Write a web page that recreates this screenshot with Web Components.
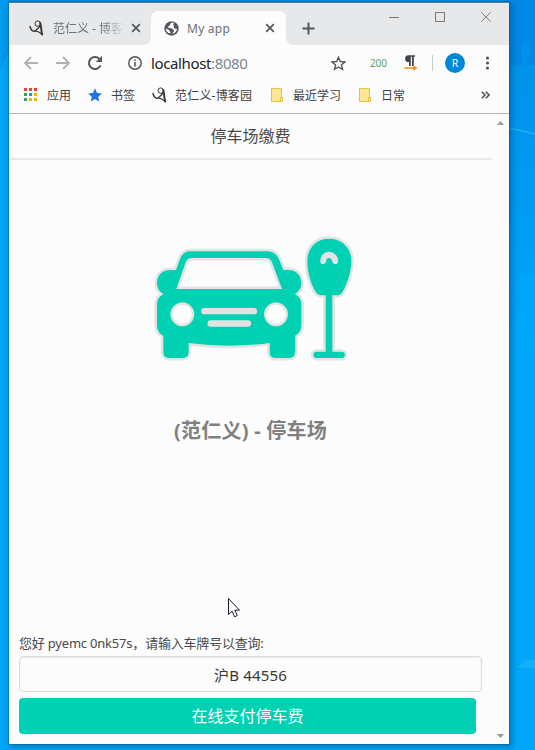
<!DOCTYPE html>
<html lang="zh-CN">
<head>
<meta charset="utf-8">
<title>My app</title>
<style>
html,body{margin:0;height:100%;overflow:hidden}
body{font-family:"Noto Sans","Noto Sans CJK SC",sans-serif;color:#3c4043}
</style>
</head>
<body>
<desk-top>
  <browser-window>
    <tab-strip slot="chrome"></tab-strip>
    <address-bar slot="chrome"></address-bar>
    <bookmark-bar slot="chrome"></bookmark-bar>
    <parking-page></parking-page>
  </browser-window>
</desk-top>
<script>
function define(name, html) {
  const t = document.createElement('template');
  t.innerHTML = html;
  customElements.define(name, class extends HTMLElement {
    constructor() {
      super();
      this.attachShadow({mode: 'open'}).append(t.content.cloneNode(true));
    }
  });
}

define('desk-top', `
<style>
:host{display:block;box-sizing:border-box;position:relative;width:535px;height:750px;padding:2px 26px 7px 9px;overflow:hidden;background:linear-gradient(#0090e8 0,#0095ec 100px,#009df5 220px,#00a7f8 330px,#00a7f8)}
.wall{position:absolute;inset:0}
</style>
<svg class="wall" width="535" height="750" viewBox="0 0 535 750">
<path d="M0 0h9v40L0 70z" fill="#009bf0"/><path d="M0 70L9 50V750H0z" fill="#00a5f6"/>
<path d="M521 43h9v14h-3v8h8V0h-26v66h14v-9h-2z" fill="#0089e5"/>
<path d="M509 128l26 6" stroke="#23adf7" stroke-width="1.600"/><path d="M520 274h15v80h-18v-31h4z" fill="#00a9fa" opacity=".6"/>
<path d="M516 668l9-8h10v8z" fill="#0fb0f8"/>
</svg>
<slot></slot>`);

define('browser-window', `
<style>
:host{position:relative;display:flex;flex-direction:column;box-sizing:border-box;width:500px;height:742px;border-top:1px solid #55809b;background:#fcfcfc;box-shadow:0 0 0 1px rgba(0,90,140,.45),2px 2px 6px 1px rgba(0,70,120,.5)}
.main{flex:1;display:flex;min-height:0}
.bar{width:17px;margin-left:auto;display:flex;flex-direction:column;justify-content:space-between;align-items:center;padding:7px 0 6px;box-sizing:border-box}
svg{display:block}
.cur{position:absolute;left:218px;top:594px}
</style>
<slot name="chrome"></slot>
<div class="main"><slot></slot>
<div class="bar"><svg width="7" height="4"><path d="M0 4L3.500 0L7 4z" fill="#999"/></svg><svg width="7" height="4"><path d="M0 0L3.500 4L7 0z" fill="#999"/></svg></div></div>
<svg class="cur" width="14" height="21" viewBox="0 0 14 21"><path d="M1.500 1.500v16l3.600-3.300 2.500 5.600 2.700-1.200-2.500-5.400h4.700z" fill="#fff" stroke="#1b1b2b" stroke-width="1"/></svg>`);

define('fan-icon', `
<style>:host{display:block;width:15px;height:16px}svg{display:block}</style>
<svg width="15" height="16" viewBox="0 0 15 16" fill="none" stroke="#3b3335" stroke-linecap="round"><path d="M1 6.500c.8 3.500 2.500 5.200 4.500 4.600S9 8.500 11 6" stroke-width="1.400"/><circle cx="8.700" cy="3.600" r="2.700" stroke-width="1"/><path d="M11.300 3c1 3 .7 7.500 1.900 11.500" stroke-width="1.900"/><path d="M6 11.200c2.500-.7 4.500 1 7 3.300" stroke-width="1.100"/></svg>`);

define('close-icon', `
<style>:host{display:block;width:10px;height:10px}svg{display:block}</style>
<svg width="10" height="10"><path d="M1.200 1.200l7.600 7.600M8.800 1.200L1.200 8.800" stroke="#53575b" stroke-width="1.700"/></svg>`);

define('tab-strip', `
<style>
:host{display:flex;height:42px;background:#e7e8ea;font-size:12px;color:#6d7175}
svg{display:block}
.tab{display:flex;align-items:center;height:34px;margin-top:8px;box-sizing:border-box}
.one{width:142px;padding:0 10px 0 20px}
.one span{width:74px;margin:0 4px 0 9px;white-space:nowrap;-webkit-mask-image:linear-gradient(90deg,#000 48px,transparent 72px)}
.two{position:relative;width:135px;padding:0 11px 0 13px;background:#fcfcfc;border-radius:7px 7px 0 0}
.two:before,.two:after{content:"";position:absolute;bottom:0;width:7px;height:7px}
.two:before{left:-7px;background:radial-gradient(circle at 0 0,transparent 6.500px,#fcfcfc 7px)}
.two:after{right:-7px;background:radial-gradient(circle at 100% 0,transparent 6.500px,#fcfcfc 7px)}
.two span{margin-left:8px;flex:1;white-space:nowrap;letter-spacing:.25px}
.plus{margin:19px 0 0 16px}
.win{display:flex;gap:36px;margin:9px 18px 0 auto;height:11px}
</style>
<div class="tab one"><fan-icon></fan-icon><span>范仁义 - 博客</span><close-icon></close-icon></div>
<div class="tab two"><svg width="15" height="15" viewBox="0 0 15 15"><circle cx="7.500" cy="7.500" r="7.200" fill="#53575b"/><path d="M8.500 1.500C6 1.500 7 3.500 5.500 4.500S4 6 4.500 7l3 .3c1.500.2 1 2 2.500 2 .5 1.200-1 2-2 3.500 3-.3 5-2.500 5-5-1-.3-2 .2-2.800-.8C9 6.500 10.500 5 9.500 4S10.500 2.500 10 2zM1.800 7.200c1.200 1.200 3.200.8 3.500 2.300.2 1 1.200 1 1.200 2.800C4 12.500 2 10.500 1.800 7.200z" fill="#fcfcfc"/></svg><span>My app</span><close-icon></close-icon></div>
<svg class="plus" width="13" height="13"><path d="M6.500 .5v12M.5 6.500h12" stroke="#53575b" stroke-width="2"/></svg>
<div class="win"><svg width="10" height="11"><path d="M0 5.500h10" stroke="#777"/></svg><svg width="10" height="11"><path d="M.5 .5h9v9h-9z" fill="none" stroke="#777"/></svg><svg width="10" height="11"><path d="M.3 .3l9.400 9.400M9.700 .3L.3 9.700" stroke="#777" stroke-width=".9"/></svg></div>`);

define('address-bar', `
<style>
:host{display:flex;align-items:center;height:36px;box-sizing:border-box;padding-left:14px}
svg{display:block;flex:none}
.url{width:180px;margin-left:9px;font-size:15px;color:#202124;white-space:nowrap;line-height:20px;letter-spacing:-.37px;padding-bottom:1px}
.url i{font-style:normal;color:#80868b}
.code{width:17px;margin-left:24px;font-size:10px;color:#62a062;white-space:nowrap;letter-spacing:-.1px}
.sep{width:1px;height:16px;background:#c0d0c6;margin-left:14px}
.av{width:20px;height:20px;border-radius:50%;background:#0088d8;color:#fff;font-size:10.500px;line-height:20px;text-align:center;margin-left:12px}
</style>
<svg width="16" height="16" viewBox="0 0 16 16"><path d="M15 8H2M8 2L2 8l6 6" fill="none" stroke="#afb0b1" stroke-width="1.800"/></svg>
<svg style="margin-left:16px" width="16" height="16" viewBox="0 0 16 16"><path d="M1 8h13M8 2l6 6-6 6" fill="none" stroke="#afb0b1" stroke-width="1.800"/></svg>
<svg style="margin-left:16px" width="16" height="16" viewBox="0 0 16 16"><path d="M13.500 10.300A6 6 0 1 1 12.200 3.800" fill="none" stroke="#53575b" stroke-width="2"/><path d="M15 .8v6.200H8.800z" fill="#53575b"/></svg>
<svg style="margin-left:25px" width="14" height="14" viewBox="0 0 14 14"><circle cx="7" cy="7" r="6.200" fill="none" stroke="#53575b" stroke-width="1.500"/><path d="M7 6v4.500M7 3.500v1.500" stroke="#53575b" stroke-width="1.600"/></svg>
<div class="url">localhost<i>:8080</i></div>
<svg width="15" height="15" viewBox="0 0 15 15"><path d="M7.500 1.300l1.800 4.200 4.600.4-3.500 3 1.100 4.500-4-2.400-4 2.400 1.100-4.500-3.500-3 4.600-.4z" fill="none" stroke="#53575b" stroke-width="1.400"/></svg>
<div class="code">200</div>
<svg style="margin-left:17px" width="14" height="16" viewBox="0 0 14 16"><path d="M11 .3H4.500a3.400 3.400 0 0 0 0 6.800H5v4h1.800V1.800H8V11h1.800V1.800H11z" fill="#41464c"/><path d="M.3 12.200h9v-2L13.500 13l-4.200 2.700v-1.900h-9z" fill="#f98b14"/></svg>
<div class="sep"></div><div class="av">R</div>
<svg style="margin-left:20px" width="5" height="14"><g fill="#53575b"><circle cx="2.500" cy="2" r="1.600"/><circle cx="2.500" cy="7" r="1.600"/><circle cx="2.500" cy="12" r="1.600"/></g></svg>`);

define('bookmark-bar', `
<style>
:host{display:flex;align-items:center;height:33px;box-sizing:border-box;padding:0 19px 5px 15px;border-bottom:1px solid #b3b7b3;font-size:12px;white-space:nowrap}
svg{display:block;flex:none}
span{flex:none}
</style>
<svg width="13" height="13"><g><path d="M0 0h3v3H0zM5 0h3v3H5zM10 0h3v3h-3z" fill="#ea4335"/><path d="M0 5h3v3H0zM0 10h3v3H0z" fill="#34a05a"/><path d="M5 5h3v3H5z" fill="#1a8cf0"/><path d="M10 5h3v3h-3zM5 10h3v3H5zM10 10h3v3h-3z" fill="#f5b400"/></g></svg>
<span style="margin-left:10px;width:24px">应用</span>
<svg style="margin-left:17px" width="14" height="14" viewBox="0 0 14 14"><path d="M7 .3l2 4.700 4.900.4-3.700 3.300 1.100 4.900L7 11l-4.300 2.600 1.100-4.900L.1 5.400 5 5z" fill="#1a73e8"/></svg>
<span style="margin-left:9px;width:24px">书签</span>
<fan-icon style="margin-left:17px"></fan-icon>
<span style="margin-left:8px;width:78px;letter-spacing:.2px">范仁义-博客园</span>
<svg style="margin-left:18px" width="12" height="14"><path d="M.5 .5h10v9h1v4H.5z" fill="#ffe694" stroke="#e6c144"/><path d="M9.500 13.500v-4h2" fill="none" stroke="#e6c144"/></svg>
<span style="margin-left:10px;width:48px">最近学习</span>
<svg style="margin-left:18px" width="12" height="14"><path d="M.5 .5h10v9h1v4H.5z" fill="#ffe694" stroke="#e6c144"/><path d="M9.500 13.500v-4h2" fill="none" stroke="#e6c144"/></svg>
<span style="margin-left:10px">日常</span>
<svg style="margin-left:auto" width="9" height="8"><path d="M.8 .8L4 4 .8 7.200M4.800 .8L8 4 4.800 7.200" fill="none" stroke="#53575b" stroke-width="1.600"/></svg>`);

define('parking-art', `
<style>:host{display:block;width:230px;height:150px}svg{display:block}</style>
<svg width="230" height="150" viewBox="0 0 690 450">
<defs><filter id="soft"><feGaussianBlur stdDeviation="2"/></filter><g id="s">
<path fill-rule="evenodd" d="M150 79H380C400 79 410 88 417 103L430 135H445C470 135 484 153 484 174C484 188 477 201 464 207C478 214 484 224 484 240V300C484 316 476 327 465 332V380Q465 399 446 399H408Q389 399 389 380V354Q268 370 146 354V380Q146 399 127 399H89Q70 399 70 380V332C59 327 51 316 51 300V240C51 224 58 214 71 207C58 201 51 188 51 174C51 153 65 135 90 135H108L120 103C126 88 135 79 150 79ZM155 99C145 99 141 103 137 112L109 192H426L396 112C392 103 388 99 378 99ZM127 232a36 36 0 1 0 .1 0ZM408 232a36 36 0 1 0 .1 0ZM193 249a9 9 0 0 0 0 19H342a9 9 0 0 0 0-19ZM212 286a9 9 0 0 0 0 19H324a9 9 0 0 0 0-19Z"/>
<path fill-rule="evenodd" d="M567 41C607 41 634 70 634 108C634 143 620 180 608 200Q602 211 589 211H577V380H605a9 9 0 0 1 0 19H530a9 9 0 0 1 0-19H557V211H548Q533 211 527 200C513 178 502 143 502 108C502 70 528 41 567 41ZM541 108C541 91 553 80 567 80S594 91 594 108C596 120 581 120 577 111C576 103 573 99 567 99S559 103 558 111C554 120 540 120 541 108Z"/>
</g></defs>
<path d="M190 258H345M210 295H326M549 112q0-22 18-22t18 22" fill="none" stroke="#dfe0e0" stroke-width="18" stroke-linecap="round"/>
<use href="#s" fill="#e2e4e4" stroke="#e2e4e4" stroke-width="15" stroke-linejoin="round" filter="url(#soft)"/>
<use href="#s" fill="#00d1b2"/>
</svg>`);

define('parking-page', `
<style>
:host{display:flex;flex-direction:column;width:483px;height:630px;color:#4a4a4a}
header{height:46px;box-sizing:border-box;border-bottom:2px solid #e9e9e9;text-align:center;font-size:16px;line-height:45px}
parking-art{margin:65px 0 0 131px}
h1{margin:41px 0 0 165px;font-size:20px;line-height:30px;font-weight:700;color:#808080;white-space:nowrap;letter-spacing:.25px}
.form{margin-top:auto;padding:0 10px 10px}
p{margin:0 0 3px;font-size:13px;line-height:20px;white-space:nowrap;letter-spacing:-.2px}
.in,.btn{box-sizing:border-box;height:36px;border-radius:4px;text-align:center;font-size:16px}
.in{border:1px solid #dbdbdb;box-shadow:inset 0 1px 2px rgba(10,10,10,.08);line-height:36px;color:#363636;font-size:15px;letter-spacing:.15px}
.btn{margin-top:6px;width:457px;background:#00d1b2;color:#fff;line-height:36px}
</style>
<header>停车场缴费</header>
<parking-art></parking-art>
<h1>(范仁义) - 停车场</h1>
<div class="form"><p>您好 pyemc 0nk57s，请输入车牌号以查询:</p>
<div class="in">沪B 44556</div><div class="btn">在线支付停车费</div></div>`);
</script>
</body>
</html>
